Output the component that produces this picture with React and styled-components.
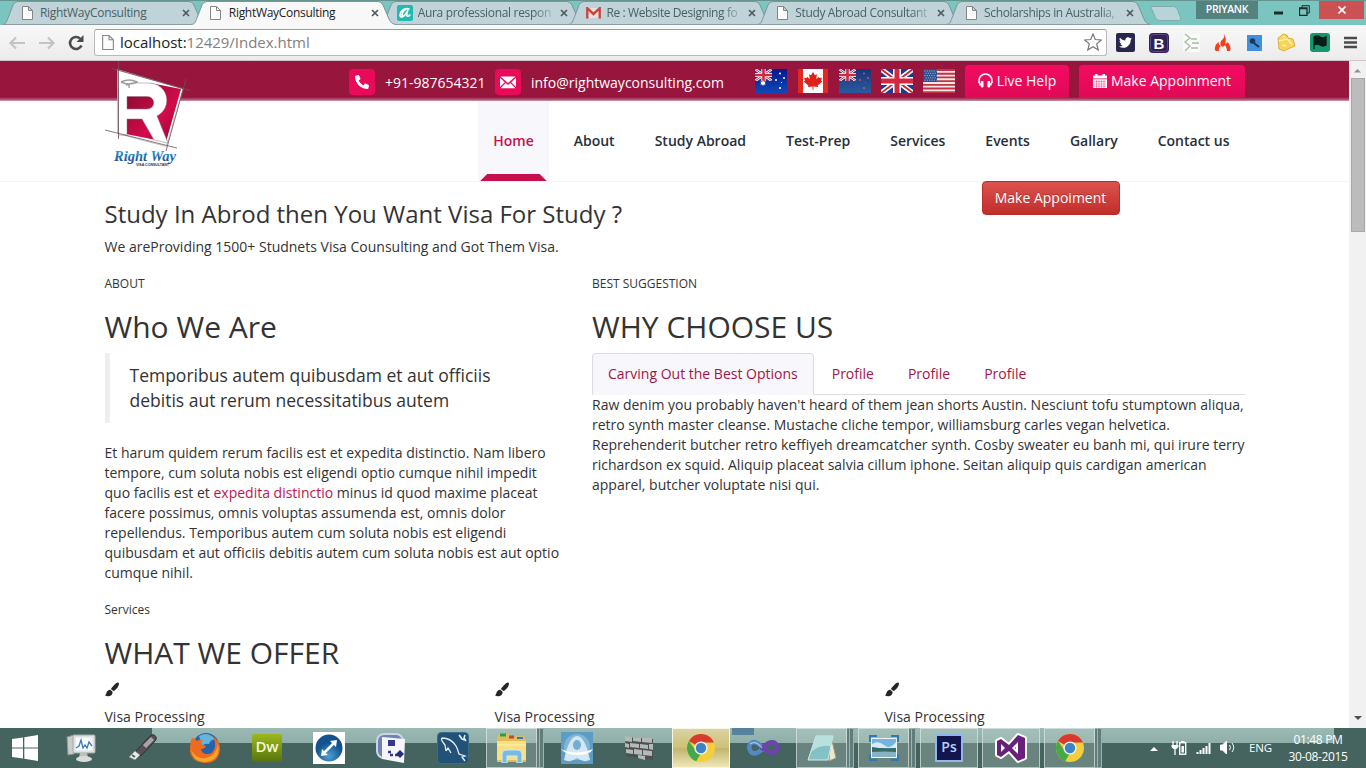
import React from "react";
import styled, { createGlobalStyle, css } from "styled-components";
import { FaPhoneAlt, FaTwitter } from "react-icons/fa";

const GlobalStyle = createGlobalStyle`
  * { box-sizing: border-box; }
  html, body { margin: 0; padding: 0; overflow: hidden; }
  body { font-family: "Open Sans", "Noto Sans", sans-serif; font-size: 14px; line-height: 20px; color: #333; background: #fff; }
  svg { display: block; flex: none; }
`;

const Desktop = styled.div`
  width: 1366px;
  height: 768px;
  display: flex;
  flex-direction: column;
  overflow: hidden;
`;

/* ---------- browser frame ---------- */
const TabStrip = styled.div`
  height: 25px;
  flex: none;
  display: flex;
  background: #7ac5bf;
  border-top: 1px solid #66948f;
  padding-left: 2px;
`;
const TabBox = styled.div`
  position: relative;
  z-index: ${(p) => (p.$active ? 3 : 1)};
  width: 205px;
  height: 25px;
  flex: none;
  margin-right: -16.2px;
  display: flex;
  align-items: center;
  padding: 0 17px 1px 18px;
`;
const TabShape = styled.svg`
  position: absolute;
  left: 0;
  top: 0;
`;
const TabTitle = styled.span`
  position: relative;
  flex: none;
  width: 135px;
  margin-left: 6px;
  font-family: "Open Sans", sans-serif;
  font-size: 12px;
  line-height: 20px;
  letter-spacing: ${(p) => p.$ls || "-0.3px"};
  white-space: nowrap;
  color: ${(p) => (p.$active ? "#222" : "#4d6064")};
  ${(p) =>
    p.$fade &&
    css`
      mask-image: linear-gradient(90deg, #000 86%, rgba(0, 0, 0, 0.15) 100%);
    `}
`;
const TabIcon = styled.span`
  position: relative;
  width: 14px;
  display: flex;
  justify-content: center;
`;
const TabClose = styled.svg`
  position: relative;
  margin-left: 7px;
`;
const NewTab = styled.svg`
  margin-left: 14px;
  margin-top: 4px;
`;
const WindowButtons = styled.div`
  margin-left: auto;
  display: flex;
  align-items: flex-start;
`;
const UserBadge = styled.div`
  width: 62px;
  height: 18px;
  background: #54827f;
  color: #fff;
  font-size: 10.5px;
  line-height: 17px;
  text-align: center;
  letter-spacing: -0.3px;
  font-weight: 600;
`;
const WinButton = styled.div`
  width: ${(p) => p.$w}px;
  height: 18px;
  display: flex;
  align-items: center;
  justify-content: center;
  background: ${(p) => p.$bg || "transparent"};
`;
const Toolbar = styled.div`
  height: 36px;
  flex: none;
  display: flex;
  align-items: center;
  padding: 0 9px 0 8px;
  background: linear-gradient(#f8f8f8, #ececec);
  border-bottom: 1px solid #cfc4c8;
`;
const NavIcons = styled.div`
  display: flex;
  align-items: center;
  gap: 12px;
  width: 86px;
  flex: none;
`;
const AddressBar = styled.div`
  width: 1013px;
  height: 27px;
  flex: none;
  display: flex;
  align-items: center;
  padding: 0 4px 1px 7px;
  background: #fff;
  border: 1px solid #b9b9b9;
  border-top-color: #9c9c9c;
  border-radius: 3px;
`;
const Address = styled.div`
  flex: 1;
  margin-left: 6px;
  font-size: 15px;
  letter-spacing: -0.02px;
  color: #808080;
  white-space: nowrap;
  b { font-weight: 400; color: #222; }
`;
const Extensions = styled.div`
  flex: 1;
  display: flex;
  align-items: center;
  justify-content: space-between;
  padding-left: 9px;
`;

/* ---------- page ---------- */
const Viewport = styled.div`
  flex: 1;
  min-height: 0;
  display: flex;
`;
const Page = styled.main`
  position: relative;
  width: 1349px;
  overflow: hidden;
  background: #fff;
`;
const Scrollbar = styled.div`
  width: 17px;
  background: #f1f1f1;
  display: flex;
  flex-direction: column;
  align-items: center;
  justify-content: space-between;
`;
const ScrollTop = styled.div`
  display: flex;
  flex-direction: column;
  align-items: center;
  gap: 5px;
  padding-top: 7px;
`;
const ScrollThumb = styled.div`
  width: 14px;
  height: 154px;
  background: #bcbcbc;
  border: 1px solid #a8a8a8;
`;
const Container = styled.div`
  width: 1140px;
  margin-left: 104.5px;
`;
const TopBar = styled.div`
  height: 40px;
  background: linear-gradient(#98153d 0, #98153d 34px, #93123b 36px, #ba6580 39px, #d2a2b1 40px);
`;
const TopBarRow = styled(Container)`
  margin-left: 105px;
  display: flex;
  justify-content: flex-end;
  align-items: flex-start;
  color: #fff;
  white-space: nowrap;
`;
const Badge = styled.span`
  width: 26px;
  height: 26px;
  margin-top: 8px;
  border-radius: 4px;
  background: #e90b5a;
  display: flex;
  align-items: center;
  justify-content: center;
`;
const ContactText = styled.span`
  width: ${(p) => p.$w}px;
  margin: 12px 10px 0;
`;
const Flags = styled.div`
  display: flex;
  gap: 10px;
  margin: 8px 10px 0 20px;
`;
const TopButton = styled.button`
  width: ${(p) => p.$w}px;
  height: 33px;
  margin: 4px 0 0 ${(p) => p.$ml || 0}px;
  padding: 0 0 2px;
  border: 0;
  border-radius: 4px 4px 0 0;
  background: linear-gradient(#f40b60, #df0a55);
  color: #fff;
  font: 14px/20px "Open Sans", sans-serif;
  display: flex;
  align-items: center;
  justify-content: center;
  gap: 4px;
  white-space: nowrap;
`;
const NavBar = styled.nav`
  height: 81px;
  background: #fff;
  border-bottom: 1px solid #f4f4f4;
`;
const NavList = styled(Container)`
  display: flex;
  justify-content: flex-end;
  gap: 10px;
`;
const NavItem = styled.a`
  height: 80px;
  padding: 0 15px;
  font-weight: 600;
  line-height: 80px;
  white-space: nowrap;
  color: ${(p) => (p.$active ? "#c2134f" : "#26303a")};
  ${(p) =>
    p.$active &&
    css`
      background: #f8f7fc;
      &::after {
        content: "";
        display: block;
        height: 7px;
        margin: -7px -13px 0;
        background: #c60f4f;
        clip-path: polygon(7px 0, calc(100% - 7px) 0, 100% 100%, 0 100%);
      }
    `}
`;
const Logo = styled.svg`
  position: absolute;
  left: 102px;
  top: 0;
`;
const Hero = styled(Container)`
  display: flex;
  justify-content: space-between;
  align-items: flex-start;
  padding-right: 125px;
`;
const H3 = styled.h3`
  margin: 19px 0 10px;
  font-size: 24px;
  line-height: 26.4px;
  font-weight: 400;
  white-space: nowrap;
`;
const P = styled.p`
  margin: 0 0 10px;
  white-space: nowrap;
`;
const DangerButton = styled.button`
  width: 138px;
  height: 34px;
  margin-top: -1px;
  padding: 0;
  border: 1px solid #b92c28;
  border-radius: 4px;
  background: linear-gradient(#dc524e, #c12e2a);
  color: #fff;
  font: 14px/20px "Open Sans", sans-serif;
  text-shadow: 0 -1px 0 rgba(0, 0, 0, 0.2);
`;
const Columns = styled(Container)`
  display: grid;
  grid-template-columns: 487.5px 653px;
`;
const H6 = styled.h6`
  margin: 10px 0;
  font-size: 12px;
  line-height: 13.2px;
  font-weight: 400;
`;
const H2 = styled.h2`
  margin: 19.4px 0 10px;
  font-size: 30px;
  line-height: 33px;
  font-weight: 400;
  white-space: nowrap;
`;
const Quote = styled.blockquote`
  margin: 0 0 20px;
  padding: 10px 20px;
  border-left: 5px solid #eee;
  font-size: 17.5px;
  line-height: 25px;
  white-space: nowrap;
`;
const Accent = styled.span`
  color: #c2134f;
`;
const TabList = styled.div`
  display: flex;
  gap: 2px;
  height: 42px;
  border-bottom: 1px solid #ddd;
`;
const TabLink = styled.a`
  height: 42px;
  padding: 10px 15px;
  border: 1px solid ${(p) => (p.$active ? "#ddd" : "transparent")};
  border-bottom: 0;
  border-radius: 4px 4px 0 0;
  background: ${(p) => (p.$active ? "#f8f7fc" : "transparent")};
  color: #a31545;
  white-space: nowrap;
`;
const Services = styled(Container)`
  display: grid;
  grid-template-columns: repeat(3, 390px);
  padding-top: 1px;
`;
const Service = styled.div`
  display: flex;
  flex-direction: column;
  gap: 7px;
`;

/* ---------- taskbar ---------- */
const Taskbar = styled.footer`
  height: 40px;
  flex: none;
  display: flex;
  background:
    linear-gradient(#56839a, #56839a) 732px 0 / 22px 7px no-repeat,
    linear-gradient(#9cb9b4, #8fafa9) 152px 0 / 1182px 15px no-repeat,
    #456460;
`;
const StartSlot = styled.div`
  width: 50px;
  display: flex;
  align-items: center;
  justify-content: center;
`;
const TaskSlot = styled.div`
  width: 62px;
  display: flex;
  align-items: center;
  padding-left: 2px;
`;
const TaskFrame = styled.div`
  width: 58px;
  height: 40px;
  display: flex;
  align-items: center;
  justify-content: center;
  ${(p) =>
    p.$open &&
    css`
      width: ${p.$stack ? 51 : 58}px;
      border: 1px solid rgba(225, 235, 232, 0.65);
      background: rgba(190, 205, 200, 0.3);
      box-shadow: ${p.$stack ? "3px 0 0 -1px #627d79, 3px 0 0 0 #a0b2ae, 7px 0 0 -1px #627d79, 7px 0 0 0 #a0b2ae" : "none"};
    `}
  ${(p) =>
    p.$current &&
    css`
      background: linear-gradient(#d9d2a4, #cfc176 48%, #c2b56c 52%, #eee6ba);
      border-color: #f7f5e4;
    `}
`;
const Tray = styled.div`
  margin-left: auto;
  display: flex;
  align-items: center;
  color: #fff;
  padding-right: 18px;
`;
const TrayText = styled.div`
  width: 24px;
  margin: 0 15px 0 7px;
  font-size: 11.5px;
  letter-spacing: -0.1px;
`;
const Clock = styled.div`
  width: 60px;
  text-align: center;
  font-size: 12px;
  line-height: 17px;
  letter-spacing: -0.35px;
  white-space: nowrap;
`;

const PageIcon = ({ w = 11, h = 14 }) => (
  <svg width={w} height={h} viewBox="0 0 11 14" fill="#fbfbfb" stroke="#858585">
    <path d="M.5.5h6l4 4v9H.5zM6.5.5v4h4" />
  </svg>
);
const AuraIcon = () => (
  <svg width="16" height="16" viewBox="0 0 16 16">
    <rect width="16" height="16" rx="2" fill="#25b7b2" />
    <path d="M12 4C7 2 3 7 3 10c0 4 5 2 8-5-2 5-2 8 2 5M9 4c-3 2-4 5-4 7" fill="none" stroke="#fff" strokeWidth="1.6" strokeLinecap="round" />
  </svg>
);
const GmailIcon = () => (
  <svg width="15" height="12" viewBox="0 0 15 12">
    <path d="M1 1h13v10H1z" fill="#e8e2df" />
    <path d="M1.3 11.5V1.2L7.5 7l6.2-5.8v10.3" fill="none" stroke="#c9463d" strokeWidth="2.4" />
  </svg>
);

function BrowserTab({ title, icon, active, fade, ls }) {
  return (
    <TabBox $active={active}>
      <TabShape width="205" height="26" viewBox="0 0 205 26">
        <path
          d="M0 23.5C4 23 4 22 6 17L11 4Q12.5.5 16 .5H187Q190 .5 192 4L198 18Q200 23 205 23.5V26H0z"
          fill={active ? "#f8f8f8" : "#bfd3d8"}
        />
        <path
          d="M0 23.5C4 23 4 22 6 17L11 4Q12.5.5 16 .5H187Q190 .5 192 4L198 18Q200 23 205 23.5"
          fill="none"
          stroke="#79979b"
        />
        {!active && <path d="M0 23.5H205" stroke="#8b9c9f" />}
        {!active && <path d="M0 25H205" stroke="#f8f8f8" strokeWidth="2" />}
      </TabShape>
      <TabIcon>{icon || <PageIcon />}</TabIcon>
      <TabTitle $active={active} $fade={fade} $ls={ls}>{title}</TabTitle>
      <TabClose width="8" height="8" viewBox="0 0 8 8">
        <path d="M1 1l6 6M7 1L1 7" stroke="#4e5a5c" strokeWidth="1.7" />
      </TabClose>
    </TabBox>
  );
}

const UnionJack = () => (
  <>
    <rect width="32" height="24" fill="#1f3a86" />
    <path d="M0 0l32 24M32 0L0 24" stroke="#fff" strokeWidth="5" />
    <path d="M0 0l32 24M32 0L0 24" stroke="#cf2339" strokeWidth="1.8" />
    <path d="M16 0v24M0 12h32" stroke="#fff" strokeWidth="8" />
    <path d="M16 0v24M0 12h32" stroke="#d22840" strokeWidth="5" />
  </>
);
function Flag({ kind }) {
  return (
    <svg width="32" height="24" viewBox="0 0 32 24">
      {kind === "gb" && <UnionJack />}
      {(kind === "au" || kind === "nz") && (
        <>
          <defs>
            <linearGradient id={`sky-${kind}`} x1="0" x2="0" y1="0" y2="1">
              <stop offset="0" stopColor={kind === "au" ? "#06188c" : "#1d3474"} />
              <stop offset="1" stopColor={kind === "au" ? "#1048b8" : "#2a5aa0"} />
            </linearGradient>
          </defs>
          <rect width="32" height="24" fill={`url(#sky-${kind})`} />
          <svg width="17" height="12" viewBox="0 0 32 24" preserveAspectRatio="none"><UnionJack /></svg>
          <g fill={kind === "au" ? "#fff" : "#b05a80"}>
            {kind === "au" && <path d="M8 11l.8 1.7 1.9-.3-.9 1.6.9 1.6-1.9-.2L8 17l-.8-1.6-1.9.2.9-1.6-.9-1.6 1.9.3z" />}
            <circle cx="25" cy="4.5" r="1" /><circle cx="21" cy="11" r="1" /><circle cx="29" cy="9" r="1" /><circle cx="25" cy="19" r="1.1" /><circle cx="26.5" cy="13.5" r=".6" />
          </g>
        </>
      )}
      {kind === "ca" && (
        <>
          <rect x="1" width="30" height="24" fill="#e2281f" />
          <rect x="6" width="20" height="24" fill="#fff" />
          <path d="M16 3l2 3.2 2-.9-.8 5 2.6-2.6.6 1.4 2.6-.3-1 3 1.4.8-4.8 3.8.5 1.6-4.7-.6V21h-.8v-3.6l-4.7.6.5-1.6-4.8-3.8 1.4-.8-1-3 2.6.3.6-1.4 2.6 2.6-.8-5 2 .9z" fill="#df2119" />
        </>
      )}
      {kind === "us" && (
        <>
          <rect width="32" height="24" fill="#f4e9e5" />
          <path d="M0 1h32M0 4.7h32M0 8.4h32M0 12.1h32M0 15.8h32M0 19.5h32M0 23.1h32" stroke="#c4324a" strokeWidth="1.85" />
          <rect width="14" height="13" fill="#2c4f8b" />
          <path d="M1.5 2h12M2.5 4.3h11M1.5 6.6h12M2.5 8.9h11M1.5 11.2h12" stroke="#b7c5df" strokeDasharray="1 1.3" />
        </>
      )}
    </svg>
  );
}

const RightWayLogo = () => (
  <Logo width="90" height="110" viewBox="102 61 90 110">
    <defs>
      <linearGradient id="wine" x1="0" x2="1" y1="0" y2="1">
        <stop offset="0" stopColor="#7c0c2e" /><stop offset=".6" stopColor="#d40a4b" /><stop offset="1" stopColor="#85092f" />
      </linearGradient>
      <linearGradient id="script" x1="0" x2="0" y1="0" y2="1">
        <stop offset="0" stopColor="#2cb4e8" /><stop offset="1" stopColor="#173a86" />
      </linearGradient>
    </defs>
    <path d="M117.5 69.5L183 89l-16.500 57.500-49-13z" fill="#fff" stroke="#aaa" strokeWidth=".7" />
    <path d="M126 92l24-9 31 6-15 53-40-8z" fill="url(#wine)" />
    <path
      fillRule="evenodd"
      d="M118.500 83H148c21 0 25 25 9 33l11 27-14-3-12-21h-15v16h-8.500zM127 96.500V109h20c9 0 9-12.500 0-12.500z"
      fill="#fff"
      stroke="#8a7a80"
      strokeWidth=".5"
    />
    <path d="M118 78h12v10h-12z" fill="#fff" />
    <path d="M121 82q8-4 16 0-8 4-16 0M126 85q4-2 3 3" fill="none" stroke="#9c9c9c" strokeWidth="1.5" />
    <path d="M118.500 61v78M112 68.500l78 22M105 130l72 18M186 79l-20 72" fill="none" stroke="#6b5359" strokeWidth=".8" />
    <text x="114" y="161" textLength="62" lengthAdjust="spacingAndGlyphs" fontFamily="Liberation Serif, serif" fontSize="15" fontStyle="italic" fontWeight="700" fill="url(#script)">Right Way</text>
    <text x="136" y="165.500" textLength="33" fontFamily="Liberation Sans, sans-serif" fontSize="3.600" fontWeight="700" fill="#26344d">VISA CONSULTANT</text>
  </Logo>
);

const MailGlyph = () => (
  <svg width="16" height="13" viewBox="0 0 16 13" fill="#fff">
    <path d="M.5.5h15L8 7zM0 1.8l4.8 4.4L0 11zM16 1.8l-4.8 4.4L16 11zM.6 12.2l5.1-5.1L8 9l2.3-1.9 5.1 5.1z" />
  </svg>
);
const HeadphonesGlyph = () => (
  <svg width="15" height="15" viewBox="0 0 15 15">
    <path d="M1.100 10V7.400a6.400 6.400 0 0 1 12.800 0V10" fill="none" stroke="#fff" strokeWidth="1.500" />
    <path d="M1 8.500l1.500 4M14 8.500l-1.500 4" stroke="#fff" strokeWidth="1.600" />
    <rect x="2.800" y="8" width="2.700" height="6.400" rx=".8" fill="#fff" />
    <rect x="9.500" y="8" width="2.700" height="6.400" rx=".8" fill="#fff" />
  </svg>
);
const CalendarGlyph = () => (
  <svg width="14" height="14" viewBox="0 0 14 14">
    <path d="M0 1.500h2V0h2.500v1.500h5V0H12v1.500h2v3H0zM0 5.200h14V14H0z" fill="#fff" />
    <path d="M1 7.600h12M1 10h12M1 12.200h12M3.500 6v8M6 6v8M8.500 6v8M11 6v8" stroke="#ee0b5d" strokeWidth=".4" />
  </svg>
);
const BrushGlyph = () => (
  <svg width="14" height="20" viewBox="0 0 14 20">
    <path d="M13.600 2.800c.8.8 0 3.300-1.200 4.900-1.200 1.500-2.800 3-4 3.400L5.900 8.900C6.900 7.500 8.600 5.400 10.200 4c1.300-1.100 2.800-1.800 3.400-1.200zM5.300 9.700l2.200 2.100c.4 2.200-1 4.300-3.700 4.400-1.600.1-3-.3-3.900-1.100 1.200-.3 1.200-1 1.500-2.200.4-1.700 2.100-3.300 3.900-3.200z" fill="#262626" />
  </svg>
);

/* ---------- taskbar drawings ---------- */
const ChromeIcon = () => (
  <svg width="30" height="30" viewBox="0 0 30 30">
    <circle cx="15" cy="15" r="14" fill="#f4cf3b" />
    <path d="M15 15L2.9 8A14 14 0 0 1 28 9.5H15z" fill="#d93a2f" />
    <path d="M2.9 8L10 18l4.500 3-4.300 7.200A14 14 0 0 1 2.9 8z" fill="#45a948" />
    <circle cx="15" cy="15" r="6.600" fill="#f2f4f2" />
    <circle cx="15" cy="15" r="5.200" fill="#3f83c6" />
  </svg>
);
const icons = {
  monitor: (
    <svg width="32" height="30" viewBox="0 0 32 30">
      <path d="M2 4l7-2v19l-6 1z" fill="#c9ccca" stroke="#8c9390" />
      <rect x="8" y="2" width="22" height="18" rx="1" fill="#dfe1df" stroke="#a4aaa7" />
      <rect x="10.500" y="4.500" width="17" height="13" fill="#f5faff" />
      <path d="M11 15l3-2 2-6 2 8 2-3 2 3 2-6 3 4" fill="none" stroke="#3f78b5" strokeWidth="1.300" />
      <path d="M15 20h7l1 4H14z" fill="#bbc0bd" /><ellipse cx="19" cy="26" rx="8" ry="3" fill="#d9dcda" />
    </svg>
  ),
  usb: (
    <svg width="32" height="30" viewBox="0 0 32 30">
      <path d="M9 18L23 3q4-3 6 1 1 2-1 4L14 23z" fill="#554f56" stroke="#322e33" />
      <path d="M16 12l8-8 3 3-8 8z" fill="#aaa5aa" />
      <path d="M8 18l5 4-5 5-6-3z" fill="#e9eaea" stroke="#8c8f8f" /><path d="M5 22l3 2" stroke="#565" strokeWidth="2" />
    </svg>
  ),
  firefox: (
    <svg width="32" height="32" viewBox="0 0 32 32">
      <circle cx="17" cy="14" r="13" fill="#2763ab" /><path d="M10 4q9-5 16 3-5 1-6 5-4-1-7 2z" fill="#62b5dd" />
      <path d="M3 6q3 0 5 3 3-2 6-1-3 2-1 5l4 1q-1 3-5 3 1 6 8 5 7-2 6-12-1-4-3-6 8 4 8 13-1 14-15 14Q0 30 1 15q0-5 2-9z" fill="#ed6a20" />
      <path d="M29 12q3 17-14 18Q4 29 2 18q6 10 15 8 10-2 12-14z" fill="#f7a62a" />
    </svg>
  ),
  dw: (
    <svg width="30" height="28" viewBox="0 0 30 28">
      <defs><linearGradient id="dw" x1="0" x2="0" y1="0" y2="1"><stop stopColor="#9db81d" /><stop offset="1" stopColor="#55740d" /></linearGradient></defs>
      <rect width="30" height="28" rx="2" fill="url(#dw)" />
      <text x="15" y="18" textAnchor="middle" fontFamily="Open Sans, sans-serif" fontSize="15" fontWeight="600" fill="#f3f8d0">Dw</text>
    </svg>
  ),
  arrows: (
    <svg width="32" height="32" viewBox="0 0 32 32">
      <defs><radialGradient id="ball" cy=".8"><stop stopColor="#4f9fd2" /><stop offset="1" stopColor="#12528f" /></radialGradient></defs>
      <rect width="32" height="32" fill="#fff" /><circle cx="16" cy="16" r="13.500" fill="url(#ball)" />
      <path d="M11 21l10-10" stroke="#fff" strokeWidth="2.500" /><path d="M17 9l7-1-1 7zM9 17l-1 7 7-1z" fill="#fff" />
    </svg>
  ),
  flow: (
    <svg width="30" height="30" viewBox="0 0 30 30">
      <rect x="1" y="1" width="26" height="24" rx="7" fill="#6d84b4" stroke="#cbd5e7" strokeWidth="2" />
      <path d="M6 4l23 2-1 24-22-4z" fill="#f5f6fb" /><rect x="12" y="7" width="7" height="6" fill="#36388f" />
      <path d="M12 19h3M14 22h3M19 22h3" stroke="#36388f" strokeWidth="2.500" /><path d="M24 17l4 4-4 4-4-4z" fill="#242b80" />
    </svg>
  ),
  mysql: (
    <svg width="32" height="32" viewBox="0 0 32 32">
      <rect x=".5" y=".5" width="31" height="31" rx="4" fill="#225277" stroke="#3b6c8c" />
      <path d="M9 19l-1-6q-5-6-3-7 9 0 14 8 2 4 3 8l6 2-3 1 3 4M9 19l2-3 3 5" fill="none" stroke="#e5eff5" strokeWidth="1.300" />
      <path d="M22 3l2 2M28 3l-1 3 2 3M22 3l3 4 3 1" fill="none" stroke="#e5eff5" strokeWidth="1.500" />
    </svg>
  ),
  folder: (
    <svg width="34" height="30" viewBox="0 0 34 30">
      <path d="M2 4l2-3h10l2 3 12-1 3 3v23H2z" fill="#e2bc57" /><path d="M5 2h6" stroke="#2e9c47" strokeWidth="3" /><path d="M14 4h5" stroke="#c7433b" strokeWidth="3" /><path d="M22 5h6" stroke="#3a7ab4" strokeWidth="2" />
      <path d="M2 8h29v19H2z" fill="#f8df84" /><path d="M2 12h29" stroke="#fff2b2" />
      <path d="M7 30V21q0-4 4-4h12q4 0 4 4v9h-5v-7H12v7z" fill="#79bbdf" stroke="#d1ebf7" />
    </svg>
  ),
  azure: (
    <svg width="32" height="32" viewBox="0 0 32 32">
      <rect width="32" height="32" fill="#5d9cc5" /><circle cx="16" cy="15" r="13" fill="#7fb6d8" />
      <path d="M3 28Q8 4 16 4t13 24q-7 3-13-2-6 5-13 2z" fill="#d3e7f2" />
      <ellipse cx="16" cy="13" rx="4" ry="5" fill="#75add1" />
      <path d="M0 17q15 7 32 0-3 6-15 6T0 17" fill="#fff" />
    </svg>
  ),
  wall: (
    <svg width="30" height="26" viewBox="0 0 30 26">
      <path d="M1 2l28 2v21L2 21z" fill="#4a514f" />
      <g fill="#b4b8b6">
        <path d="M1 1l7 1v5L1 6zM9 2l8 1v4L9 6zM18 3h10v5l-10-1zM1 8l4 1v4L1 12zM6 8l9 1v4l-9-1zM16 9l8 1v4l-8-1zM25 9h4v6l-4-1zM2 14l7 1v4l-7-1zM10 14l8 1v5l-8-1zM19 15l9 1v5l-9-1zM14 20l7 1v4l-7-2z" />
      </g>
    </svg>
  ),
  infinity: (
    <svg width="34" height="18" viewBox="0 0 34 18" fill="none" strokeWidth="4.500">
      <path d="M19 12Q11 1 6 3.500 1 7 5 13q5 4 12-4" stroke="#5389c5" /><path d="M15 11Q22 2 28 3.500q5 3 2 9-5 4-13-4" stroke="#6c45aa" /><path d="M4 5q6-4 12 4" stroke="#a1c8e8" strokeWidth="1.200" />
    </svg>
  ),
  notes: (
    <svg width="30" height="28" viewBox="0 0 30 28">
      <path d="M24 2l5 22-7 3z" fill="#eee8c9" stroke="#9b9a83" /><path d="M9 2h17l-5 24H1z" fill="#83c1c4" stroke="#d6eceb" /><path d="M9 2h17l-2 10Q12 10 3 19z" fill="#b9e0df" />
    </svg>
  ),
  photo: (
    <svg width="30" height="26" viewBox="0 0 30 26">
      <path d="M1 7V1h7M22 1h7v6M29 19v6h-7M8 25H1v-6" fill="none" stroke="#2f79b5" strokeWidth="2" />
      <rect x="2.500" y="3.500" width="25" height="19" fill="#73b3dd" stroke="#eef5f7" /><path d="M3 9q6-4 12 1t12-3v6H3z" fill="#d8ebf4" /><path d="M3 12q10 2 24 1v4q-14 1-24 0z" fill="#386a66" /><path d="M3 17q14-1 24 0v5H3z" fill="#86b4c4" />
    </svg>
  ),
  ps: (
    <svg width="28" height="28" viewBox="0 0 28 28">
      <rect x="1" y="1" width="26" height="26" fill="#15154e" stroke="#90b7e8" strokeWidth="2" />
      <text x="14" y="18" textAnchor="middle" fontFamily="Open Sans, sans-serif" fontSize="14" fontWeight="600" fill="#b2d4fa">Ps</text>
    </svg>
  ),
  vs: (
    <svg width="34" height="32" viewBox="0 0 34 32">
      <path fillRule="evenodd" d="M3 9l4-2 8 6 9-10 7 3v20l-7 3-9-10-8 6-4-2zM7 12v8l4-4zM24 10l-6 6 6 6z" fill="#68217a" stroke="#fff" strokeWidth="4" strokeLinejoin="round" />
      <path fillRule="evenodd" d="M3 9l4-2 8 6 9-10 7 3v20l-7 3-9-10-8 6-4-2zM7 12v8l4-4zM24 10l-6 6 6 6z" fill="#68217a" />
    </svg>
  ),
  chrome: <ChromeIcon />,
};

const tasks = [
  { icon: "monitor" }, { icon: "usb" }, { icon: "firefox" }, { icon: "dw" }, { icon: "arrows" }, { icon: "flow" }, { icon: "mysql" },
  { icon: "folder", open: true, stack: true }, { icon: "azure" }, { icon: "wall" }, { icon: "chrome", open: true, current: true },
  { icon: "infinity" }, { icon: "notes", open: true, stack: true }, { icon: "photo", open: true, stack: true },
  { icon: "ps", open: true }, { icon: "vs", open: true }, { icon: "chrome", open: true, stack: true },
];

const tabs = [
  { title: "RightWayConsulting" },
  { title: "RightWayConsulting", active: true },
  { title: "Aura professional respon", icon: <AuraIcon />, fade: true, ls: "-0.32px" },
  { title: "Re : Website Designing fo", icon: <GmailIcon />, fade: true, ls: "-0.4px" },
  { title: "Study Abroad Consultant", fade: true, ls: "-0.35px" },
  { title: "Scholarships in Australia,", fade: true, ls: "-0.36px" },
];

const navItems = ["Home", "About", "Study Abroad", "Test-Prep", "Services", "Events", "Gallary", "Contact us"];

function BrowserChrome() {
  return (
    <>
      <TabStrip>
        {tabs.map((t, i) => <BrowserTab key={i} {...t} />)}
        <NewTab width="34" height="17" viewBox="0 0 34 17">
          <path d="M2.500 1.500h22q3 0 4 3l3 8q1 3-2 3h-19q-3 0-4-3l-4-9q-1-2 0-2z" fill="#b7d4d8" stroke="#85a9ac" />
        </NewTab>
        <WindowButtons>
          <UserBadge>PRIYANK</UserBadge>
          <WinButton $w={40}><svg width="9" height="10"><path d="M0 8h9" stroke="#1e2b2b" strokeWidth="3" /></svg></WinButton>
          <WinButton $w={13}>
            <svg width="11" height="11" viewBox="0 0 11 11" fill="none" stroke="#1e2b2b"><path d="M.5 3h7.500v7.500H.5zM.5 3.500h7.500" strokeWidth="1.300" /><path d="M3 3V.700h7.300V8H8" /></svg>
          </WinButton>
          <WinButton $w={8} />
          <WinButton $w={45} $bg="#cb5153"><svg width="8" height="8" viewBox="0 0 8 8"><path d="M.5.5l7 7M7.500.5l-7 7" stroke="#fff" strokeWidth="1.600" /></svg></WinButton>
          <WinButton $w={2} />
        </WindowButtons>
      </TabStrip>
      <Toolbar>
        <NavIcons>
          <svg width="18" height="14" viewBox="0 0 18 14" fill="none" stroke="#c4c4c4" strokeWidth="2.200"><path d="M17 7H3M8 1.500L2.500 7 8 12.500" /></svg>
          <svg width="18" height="14" viewBox="0 0 18 14" fill="none" stroke="#c4c4c4" strokeWidth="2.200"><path d="M1 7h14M10 1.500L15.500 7 10 12.500" /></svg>
          <svg width="16" height="16" viewBox="0 0 16 16"><path d="M13.500 10.500A6 6 0 1 1 12 3.500" fill="none" stroke="#4b4b4b" strokeWidth="2.600" /><path d="M15.500 0v7H8.500z" fill="#4b4b4b" /></svg>
        </NavIcons>
        <AddressBar>
          <PageIcon w={12} h={15} />
          <Address><b>localhost:</b>12429/Index.html</Address>
          <svg width="18" height="18" viewBox="0 0 18 18"><path d="M9 1l2.300 5.500 6 .5-4.600 3.900L14.200 17 9 13.700 3.800 17l1.500-6.100L.7 7l6-.5z" fill="#fff" stroke="#777" strokeWidth="1.200" /></svg>
        </AddressBar>
        <Extensions>
          <svg width="19" height="19" viewBox="0 0 19 19"><rect width="19" height="19" rx="2" fill="#29264c" /><FaTwitter x="3" y="3" size="13" color="#fff" /></svg>
          <svg width="20" height="20" viewBox="0 0 20 20"><rect width="20" height="20" rx="4" fill="#33215a" /><rect x="1.500" y="1.500" width="17" height="17" rx="3" fill="none" stroke="#5a4a80" /><text x="10" y="15.500" textAnchor="middle" fontFamily="Liberation Sans, sans-serif" fontSize="15" fontWeight="700" fill="#fff">B</text></svg>
          <svg width="17" height="20" viewBox="0 0 17 20"><rect y="1" width="17" height="18" fill="#fafafa" /><path d="M2 1l5 4-5 4 5 4-5 5M8 6h6M9 10h7M8 15h7" fill="none" stroke="#a6bda6" strokeWidth="1.400" /></svg>
          <svg width="18" height="18" viewBox="0 0 18 18">
            <path d="M10 0q1 3-1 5-4 3-2 7-3-1-2-4-4 2-4 6-1 2 1 3h3q-1-3 2-5 2 2 4-1 2 3 2 6h3q1-2 0-5-1-3-3-4 0 2-2 2 2-5-1-10z" fill="#f0401e" />
          </svg>
          <svg width="15" height="16" viewBox="0 0 15 16"><rect width="15" height="16" fill="#4190dc" /><circle cx="5.500" cy="6" r="2.800" fill="#193959" /><path d="M7 8l5 4" stroke="#193959" strokeWidth="2" /></svg>
          <svg width="20" height="19" viewBox="0 0 20 19"><path d="M2 5l3-2 2-2 4 1 1 3 5 1 2 7-5 2-6 3-5-2z" fill="#f7d45d" stroke="#dcb145" /><path d="M3 8l8-2 5 5M7 3l2 2M6 12l4 1" fill="none" stroke="#fff2a6" strokeWidth="1.500" /></svg>
          <svg width="20" height="19" viewBox="0 0 20 19"><rect width="20" height="19" rx="3" fill="#14976d" /><path d="M4 4v12M4 4q4-2 6 0t6 0v8q-3 2-6 0t-6 0" fill="#071d18" stroke="#071d18" strokeWidth="1.400" /></svg>
          <svg width="13" height="15" viewBox="0 0 13 15"><path d="M0 3h13M0 7.500h13M0 12h13" stroke="#4b4b4b" strokeWidth="2.500" /></svg>
        </Extensions>
      </Toolbar>
    </>
  );
}

function SiteHeader() {
  return (
    <header>
      <TopBar>
        <TopBarRow>
          <Badge><FaPhoneAlt size={14} /></Badge>
          <ContactText $w={100}>+91-987654321</ContactText>
          <Badge><MailGlyph /></Badge>
          <ContactText $w={194}>info@rightwayconsulting.com</ContactText>
          <Flags>{["au", "ca", "nz", "gb", "us"].map((f) => <Flag key={f} kind={f} />)}</Flags>
          <TopButton $w={104}><HeadphonesGlyph />Live Help</TopButton>
          <TopButton $w={166} $ml={10}><CalendarGlyph />Make Appoinment</TopButton>
        </TopBarRow>
      </TopBar>
      <NavBar>
        <NavList>
          {navItems.map((n, i) => <NavItem key={n} $active={i === 0}>{n}</NavItem>)}
        </NavList>
      </NavBar>
      <RightWayLogo />
    </header>
  );
}

function Content() {
  return (
    <>
      <Hero>
        <div>
          <H3>Study In Abrod then You Want Visa For Study ?</H3>
          <P>We areProviding 1500+ Studnets Visa Counsulting and Got Them Visa.</P>
        </div>
        <DangerButton>Make Appoiment</DangerButton>
      </Hero>
      <Columns>
        <section>
          <H6>ABOUT</H6>
          <H2>Who We Are</H2>
          <Quote>Temporibus autem quibusdam et aut officiis<br />debitis aut rerum necessitatibus autem</Quote>
          <P>
            Et harum quidem rerum facilis est et expedita distinctio. Nam libero<br />
            tempore, cum soluta nobis est eligendi optio cumque nihil impedit<br />
            quo facilis est et <Accent>expedita distinctio</Accent> minus id quod maxime placeat<br />
            facere possimus, omnis voluptas assumenda est, omnis dolor<br />
            repellendus. Temporibus autem cum soluta nobis est eligendi<br />
            quibusdam et aut officiis debitis autem cum soluta nobis est aut optio<br />
            cumque nihil.
          </P>
        </section>
        <section>
          <H6>BEST SUGGESTION</H6>
          <H2>WHY CHOOSE US</H2>
          <TabList>
            <TabLink $active>Carving Out the Best Options</TabLink>
            <TabLink>Profile</TabLink>
            <TabLink>Profile</TabLink>
            <TabLink>Profile</TabLink>
          </TabList>
          <P>
            Raw denim you probably haven't heard of them jean shorts Austin. Nesciunt tofu stumptown aliqua,<br />
            retro synth master cleanse. Mustache cliche tempor, williamsburg carles vegan helvetica.<br />
            Reprehenderit butcher retro keffiyeh dreamcatcher synth. Cosby sweater eu banh mi, qui irure terry<br />
            richardson ex squid. Aliquip placeat salvia cillum iphone. Seitan aliquip quis cardigan american<br />
            apparel, butcher voluptate nisi qui.
          </P>
        </section>
      </Columns>
      <Container>
        <H6>Services</H6>
        <H2>WHAT WE OFFER</H2>
      </Container>
      <Services>
        {[0, 1, 2].map((i) => (
          <Service key={i}><BrushGlyph /><span>Visa Processing</span></Service>
        ))}
      </Services>
    </>
  );
}

export default function App() {
  return (
    <Desktop>
      <GlobalStyle />
      <BrowserChrome />
      <Viewport>
        <Page>
          <SiteHeader />
          <Content />
        </Page>
        <Scrollbar>
          <ScrollTop>
            <svg width="7" height="5"><path d="M0 4.500L3.500 1 7 4.500z" fill="#8f8f8f" /></svg>
            <ScrollThumb />
          </ScrollTop>
          <svg width="8" height="13"><path d="M0 1h8L4 5z" fill="#505050" /></svg>
        </Scrollbar>
      </Viewport>
      <Taskbar>
        <StartSlot>
          <svg width="26" height="26" viewBox="0 0 26 26" fill="#fff"><path d="M0 4l11-1.600V12.400H0zM12.300 2.200L26 0v12.400H12.300zM0 13.600h11v10L0 22zM12.300 13.600H26V26l-13.700-2.200z" /></svg>
        </StartSlot>
        {tasks.map((t, i) => (
          <TaskSlot key={i}>
            <TaskFrame $open={t.open} $stack={t.stack} $current={t.current}>{icons[t.icon]}</TaskFrame>
          </TaskSlot>
        ))}
        <Tray>
          <svg width="8" height="5"><path d="M0 5l4-4 4 4z" fill="#fff" /></svg>
          <svg width="84" height="16" viewBox="1158 741 84 16" fill="none" stroke="#fff">
            <path d="M1173 742v4M1177 742v4M1175 749v7" strokeWidth="1.300" />
            <path d="M1171.500 746h7v2l-2 2h-3l-2-2z" fill="#fff" stroke="none" />
            <rect x="1179.700" y="743.700" width="6" height="11.500" strokeWidth="1.400" /><path d="M1181 742.500h3.500" /><path d="M1182.700 747v6.500" strokeWidth="2.500" />
            <path d="M1197.500 755v-2M1200.500 755v-4M1203.500 755v-6M1206.500 755v-8M1209.500 755v-11" strokeWidth="2" />
            <path d="M1220.500 746h2l4-4v13l-4-4h-2z" fill="#fff" /><path d="M1229.500 746q2 2.500 0 5M1232 744q3.500 4.500 0 9" />
          </svg>
          <TrayText>ENG</TrayText>
          <Clock>01:48 PM<br />30-08-2015</Clock>
        </Tray>
      </Taskbar>
    </Desktop>
  );
}
